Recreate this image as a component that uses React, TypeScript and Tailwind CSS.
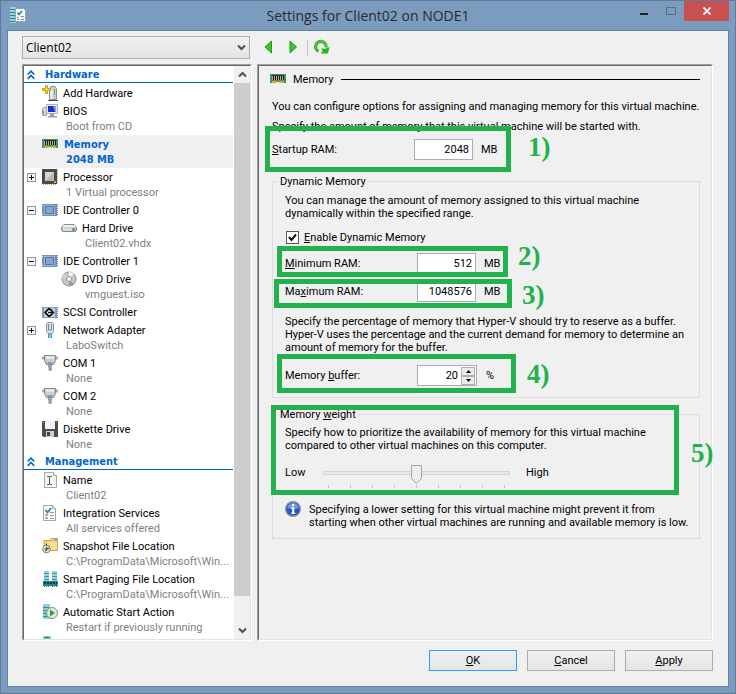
import { ReactNode, useState } from "react";

interface TreeItem {
    label: string;
    detail?: string;
    icon: ReactNode;
    toggle?: "plus" | "minus";
    child?: boolean;
    selected?: boolean;
}

interface IconProps {
    children: ReactNode;
    crisp?: boolean;
}

const Icon = ({ children, crisp }: IconProps) => (
    <svg
        width="16"
        height="16"
        viewBox="0 0 16 16"
        className="block shrink-0"
        shapeRendering={crisp ? "crispEdges" : "auto"}
        aria-hidden="true"
    >
        {children}
    </svg>
);

const MemoryIcon = () => (
    <Icon crisp>
        <path d="M0 3h16v9H0z" fill="#35976a" />
        <path d="M2 4h12v5H2z" fill="#b9ad8a" />
        <path d="M3 4h1v5H3zM5 4h1v5H5zM7 4h1v5H7zM9 4h1v5H9zM11 4h1v5h-1zM13 4h1v5h-1z" fill="#1c1c14" />
        <path d="M2 4h12v1H2z" fill="#33332a" />
        <path d="M2 10h5v2H2zM9 10h5v2H9z" fill="#e0a92c" />
        <path d="M7 11h2v1H7z" fill="#fff" />
    </Icon>
);

const AddHardwareIcon = () => (
    <Icon>
        <path d="M7.500 3.500l1.500-2h4l1.500 2v11h-7z" fill="#c9ccca" stroke="#8b8f8d" />
        <path d="M9.500 5v9" stroke="#f4f6f4" strokeWidth="2" />
        <path d="M12.500 4v6" stroke="#54b948" />
        <path d="M6 15.500h10" stroke="#4b4b4b" />
        <path d="M3.500 .5h2v3h3v2h-3v3h-2v-3h-3v-2h3z" fill="#ffdc3c" stroke="#c79a10" />
    </Icon>
);

const BiosIcon = () => (
    <Icon>
        <path d="M.5 5.500l1-1h3v8h-4z" fill="#d4d7d9" stroke="#9aa0a4" />
        <path d="M1.500 8v3" stroke="#49a850" />
        <path d="M4.500 1.500h11v9h-11z" fill="#e8ebf2" stroke="#a9aeb8" />
        <path d="M6 3h8v6H6z" fill="#1530c8" />
        <path d="M11 3h3v6h-1z" fill="#7d9cf0" />
        <path d="M8 11h4v2h3v1.500H6V13h2z" fill="#9ba0a8" />
    </Icon>
);

const ProcessorIcon = () => (
    <Icon>
        <path d="M15.500 1v13M1 15.500h13" stroke="#c8a04a" strokeDasharray="1 1" />
        <path d="M0 0h15v15H0z" fill="#4a4a4a" />
        <path d="M3 3h9v9H3z" fill="#b9b9b9" />
        <path d="M3 3h9L3 12z" fill="#d5d5d5" />
        <path d="M12 12h2v2h-2z" fill="#e2a72a" />
    </Icon>
);

const ControllerIcon = () => (
    <Icon crisp>
        <path d="M0 2h15v12H0z" fill="#7291b8" />
        <path d="M15 2h1v1h-1zM15 4h1v1h-1zM15 6h1v1h-1zM15 8h1v1h-1zM15 10h1v1h-1zM15 12h1v1h-1z" fill="#6684aa" />
        <path d="M0 3h1v1H0zM0 12h1v1H0z" fill="#fff" />
        <path d="M2 3h11v10H2z" fill="#9fb6d2" />
        <path d="M3 4h9v8H3z" fill="#58779f" />
        <path d="M4 5h7v6H4z" fill="#86a5ca" />
    </Icon>
);

const ScsiIcon = () => (
    <Icon>
        <path d="M0 3h15v11H0z" fill="#7c99bf" />
        <path d="M15.500 3v11" stroke="#6684aa" strokeDasharray="1 1" />
        <path d="M2 4h11v9H2z" fill="#bdd0e6" />
        <path d="M7 2.800l5.700 5.700L7 14.200 1.300 8.500z" fill="#fff" />
        <path d="M9.500 6.500L7 4.500l-4 4 4 4 2.500-2" fill="none" stroke="#111" strokeWidth="1.800" />
        <path d="M6 8.500h6M9 6l2.500 2.500L9 11" fill="none" stroke="#111" strokeWidth="1.600" />
    </Icon>
);

const HardDriveIcon = () => (
    <Icon>
        <path d="M3 4.500h10l2.500 3v3l-1 1h-13l-1-1v-3z" fill="#b5b5b5" stroke="#8a8a8a" />
        <path d="M3 5h10l2 2.500H1z" fill="#f0f0f0" />
        <path d="M2 9.500h9" stroke="#e8e8e8" strokeWidth="2" />
        <path d="M12.500 8v3" stroke="#35b335" strokeWidth="2" />
    </Icon>
);

const DvdIcon = () => (
    <Icon>
        <circle cx="8" cy="8" r="7" fill="#c5c7c5" stroke="#8c8e8c" />
        <path d="M8 8L3 2.500A7 7 0 0 0 1 8z" fill="#b5e0b5" />
        <path d="M8 8l5-5.500A7 7 0 0 0 8 1z" fill="#f3f3f3" />
        <path d="M8 8l5 5.500A7 7 0 0 1 8 15z" fill="#999" />
        <circle cx="8" cy="8" r="2.500" fill="#eee" stroke="#999" />
        <circle cx="8" cy="8" r="1" fill="#fff" />
    </Icon>
);

const NetworkIcon = () => (
    <Icon>
        <path d="M4.500 1.500l1-1h5l1 1v8l-1.500 2H6l-1.500-2z" fill="#d9e0e8" stroke="#8496a8" />
        <path d="M6.500 2v6h3V2" fill="none" stroke="#73869a" />
        <path d="M6 12h1.500v4H6zM8.500 12H10v4H8.500z" fill="#2397c9" />
    </Icon>
);

const ComIcon = () => (
    <Icon>
        <path d="M0 1.500h16v3H0z" fill="#a4acb2" />
        <path d="M2.500.5h11v5l-2 4h-7l-2-4z" fill="#c7ced3" stroke="#7f898f" />
        <path d="M4 2.500h8" stroke="#eef2f4" strokeWidth="2" />
        <path d="M5 7l1 2h4l1-2z" fill="#8f9aa2" />
        <path d="M6 10h4v2H6zM6.500 12.500h3V16h-3z" fill="#a3b0b8" />
        <path d="M6 12h4M7 14h3" stroke="#737f87" />
    </Icon>
);

const DisketteIcon = () => (
    <Icon crisp>
        <path d="M0 0h16v16H1l-1-1z" fill="#4c4c4c" />
        <path d="M3 0h10v8H3z" fill="#f4f4f4" />
        <path d="M1 1h1v1H1zM14 1h1v1h-1z" fill="#999" />
        <path d="M4 10h8v6H4z" fill="#cfcfcf" />
        <path d="M5 11h3v4H5z" fill="#444" />
    </Icon>
);

const NameIcon = () => (
    <Icon>
        <path d="M2.500.5h9l3 3v12h-12z" fill="#f7f7f7" stroke="#a5a5a5" />
        <path d="M11.500.5v3h3" fill="#fff" stroke="#a5a5a5" />
        <path d="M5 4.500h2l.5.500.5-.5h2M5 12.500h2l.5-.5.5.5h2M7.500 5v7" fill="none" stroke="#555" />
    </Icon>
);

const ChecklistIcon = () => (
    <Icon>
        <path d="M1.500.5h9l3 3v12h-12z" fill="#fbfbfb" stroke="#a5a5a5" />
        <path d="M10.500.5v3h3" fill="#eee" stroke="#a5a5a5" />
        <path d="M3.500 5l2 2.500L9 3" fill="none" stroke="#2a84b4" strokeWidth="1.800" />
        <path d="M3.500 9.500h2v1h-2zM3.500 12.500h2v1h-2z" fill="none" stroke="#9a9a9a" />
        <path d="M8 7.500h4M8 10.500h4M8 13.500h4" stroke="#9a9a9a" />
    </Icon>
);

const SnapshotIcon = () => (
    <Icon>
        <path d="M2 2.500h6l1-2h6.500v12H2z" fill="#f0cf78" stroke="#cfa445" />
        <path d="M12 .5h3v2h-3z" fill="#6fa7dc" />
        <path d="M5 4h10v8H5z" fill="#f8dd94" />
        <circle cx="4.500" cy="11" r="3.800" fill="#e9ecea" stroke="#7c7f7c" />
        <path d="M4.500 5.500v2M4.500 9v4M2.500 11h4" stroke="#333" />
        <path d="M4.500 11l2.500-1" stroke="#d33" strokeWidth="1.500" />
        <path d="M3 12.500h2" stroke="#2a9a3a" strokeWidth="1.500" />
    </Icon>
);

const PagingIcon = () => (
    <Icon crisp>
        <path d="M2 0h5v10H2zM10 0h5v10h-5z" fill="#9bd3d8" />
        <path d="M2 2h5v1H2zM2 5h5v1H2zM2 8h5v1H2zM10 2h5v1h-5zM10 5h5v1h-5zM10 8h5v1h-5z" fill="#3d99a3" />
        <path d="M1 10h15v5H1z" fill="#268489" />
        <path d="M2 11h2v2H2zM5 11h2v2H5zM8 11h2v2H8zM11 11h2v2h-2zM14 11h1v2h-1z" fill="#0c3c40" />
        <path d="M2 15h1v1H2zM4 15h1v1H4zM6 15h1v1H6zM10 15h1v1h-1zM12 15h1v1h-1zM14 15h1v1h-1z" fill="#268489" />
    </Icon>
);

const StartIcon = () => (
    <Icon>
        <path d="M1 0h7v15H1z" fill="#8fd0d8" />
        <path d="M1 3.500h6M1 6.500h6M1 9.500h6M1 12.500h6" stroke="#2f8d99" />
        <circle cx="10" cy="9" r="5.500" fill="#e4e8e4" stroke="#868a86" />
        <path d="M8 5.500l5 3.500-5 3.500z" fill="#25a62c" />
    </Icon>
);

const StopIcon = () => (
    <Icon crisp>
        <path d="M1 0h8v15H1z" fill="#7fc8d0" />
        <path d="M3 1h4v1H3z" fill="#1d6c76" />
    </Icon>
);

const SettingsIcon = () => (
    <Icon>
        <path d="M0 0h6v16H0z" fill="#94d4da" />
        <path d="M0 2.500h5M0 5.500h5M0 8.500h5M0 11.500h5M0 14.500h5" stroke="#2b8390" />
        <path d="M5.500 1.500h8l2 2v11h-10z" fill="#fafafa" stroke="#9aa3aa" />
        <path d="M7.500 5.500l1.500 2L12 4" fill="none" stroke="#2679b4" strokeWidth="1.500" />
        <path d="M7 10.500h2M7 12.500h2M10.500 9.500H14M10.500 12.500H14" stroke="#8b8b9a" />
    </Icon>
);

const InfoIcon = () => (
    <Icon>
        <circle cx="8" cy="8" r="7.300" fill="#2456c4" stroke="#8e9196" strokeWidth="1.400" />
        <path d="M2.500 7a5.500 5 0 0 1 11 0c-3 1.500-8 1.500-11 0z" fill="#6a95e4" />
        <path d="M7 3h2.200v2H7zM6.300 6.300h2.900v5.200h1V13H6.300v-1.500h.9V7.700h-.9z" fill="#fff" />
    </Icon>
);

const hardware: TreeItem[] = [
    { label: "Add Hardware", icon: <AddHardwareIcon /> },
    { label: "BIOS", detail: "Boot from CD", icon: <BiosIcon /> },
    { label: "Memory", detail: "2048 MB", icon: <MemoryIcon />, selected: true },
    { label: "Processor", detail: "1 Virtual processor", icon: <ProcessorIcon />, toggle: "plus" },
    { label: "IDE Controller 0", icon: <ControllerIcon />, toggle: "minus" },
    { label: "Hard Drive", detail: "Client02.vhdx", icon: <HardDriveIcon />, child: true },
    { label: "IDE Controller 1", icon: <ControllerIcon />, toggle: "minus" },
    { label: "DVD Drive", detail: "vmguest.iso", icon: <DvdIcon />, child: true },
    { label: "SCSI Controller", icon: <ScsiIcon /> },
    { label: "Network Adapter", detail: "LaboSwitch", icon: <NetworkIcon />, toggle: "plus" },
    { label: "COM 1", detail: "None", icon: <ComIcon /> },
    { label: "COM 2", detail: "None", icon: <ComIcon /> },
    { label: "Diskette Drive", detail: "None", icon: <DisketteIcon /> },
];

const management: TreeItem[] = [
    { label: "Name", detail: "Client02", icon: <NameIcon /> },
    { label: "Integration Services", detail: "All services offered", icon: <ChecklistIcon /> },
    { label: "Snapshot File Location", detail: "C:\\ProgramData\\Microsoft\\Win...", icon: <SnapshotIcon /> },
    { label: "Smart Paging File Location", detail: "C:\\ProgramData\\Microsoft\\Win...", icon: <PagingIcon /> },
    { label: "Automatic Start Action", detail: "Restart if previously running", icon: <StartIcon /> },
];

const Toggle = ({ kind }: { kind: "plus" | "minus" }) => (
    <button aria-label={kind === "plus" ? "Expand" : "Collapse"} className="block shrink-0">
        <svg width="9" height="9" viewBox="0 0 9 9" className="block" shapeRendering="crispEdges">
            <path d="M.5.5h8v8h-8z" fill="#f4f6f8" stroke="#8c9aa8" />
            <path d="M2 4h5v1H2z" fill="#111" />
            {kind === "plus" && <path d="M4 2h1v5H4z" fill="#111" />}
        </svg>
    </button>
);

const TreeRow = ({ item }: { item: TreeItem }) => (
    <li className={item.selected ? "bg-[#f0f0f0] font-['DejaVu_Sans_Condensed',Tahoma,sans-serif] font-bold text-[#0066cc]" : ""}>
        <div className={`flex h-[18px] items-center ${item.child ? "pl-[37px]" : "pl-[3px]"}`}>
            {!item.child && <span className="w-[15px] shrink-0">{item.toggle && <Toggle kind={item.toggle} />}</span>}
            {item.icon}
            <a href="#" className={`whitespace-nowrap ${item.selected ? "pl-[6px]" : "pl-[5px]"}`}>{item.label}</a>
        </div>
        {item.detail && (
            <p
                className={`h-[15px] leading-[13px] whitespace-nowrap
                    ${item.child ? "pl-[61px]" : "pl-[42px]"} ${item.selected ? "" : "text-[#808080]"}`}
            >
                {item.detail}
            </p>
        )}
    </li>
);

const TreeHeading = ({ title }: { title: string }) => (
    <h2 className="flex h-[18px] items-start font-['DejaVu_Sans_Condensed',Tahoma,sans-serif] font-bold text-[#0066cc]">
        <span className="flex h-[17px] w-full items-center border-b border-[#0066cc] pt-px pl-[3px]">
            <svg width="8" height="10" viewBox="0 0 8 10" className="block" aria-hidden="true">
                <path d="M.7 4.500L4 1.200l3.300 3.300M.7 8.800L4 5.500l3.300 3.300" fill="none" stroke="#0066cc" strokeWidth="1.700" />
            </svg>
            <span className="pl-[10px]">{title}</span>
        </span>
    </h2>
);

const Chevron = ({ up }: { up?: boolean }) => (
    <svg width="9" height="7" viewBox="0 0 9 7" className="block" aria-hidden="true">
        <path d={up ? "M1 5.500L4.500 2 8 5.500" : "M1 1.500L4.500 5 8 1.500"} fill="none" stroke="#505050" strokeWidth="2" />
    </svg>
);

const Sidebar = () => (
    <nav className="flex w-[230px] shrink-0 border border-t-[#a0a0a0] border-r-white border-b-white border-l-[#a0a0a0]">
        <div className="flex min-h-0 w-full border border-t-[#696969] border-r-[#e3e3e3] border-b-[#e3e3e3] border-l-[#696969] bg-white">
            <div className="min-w-0 flex-1 overflow-hidden pr-px">
                <TreeHeading title="Hardware" />
                <ul>
                    {hardware.map((item) => (
                        <TreeRow key={item.label} item={item} />
                    ))}
                </ul>
                <TreeHeading title="Management" />
                <ul>
                    {management.map((item) => (
                        <TreeRow key={item.label} item={item} />
                    ))}
                </ul>
                <div className="pl-[18px]">
                    <StopIcon />
                </div>
            </div>
            <div className="flex w-4 shrink-0 flex-col bg-[#f0f0f0]">
                <button aria-label="Scroll up" className="flex h-[17px] shrink-0 items-center justify-center">
                    <Chevron up />
                </button>
                <div className="flex-1 bg-[#cdcdcd]" />
                <div className="h-[26px] shrink-0" />
                <button aria-label="Scroll down" className="flex h-[17px] shrink-0 items-center justify-center">
                    <Chevron />
                </button>
            </div>
        </div>
    </nav>
);

interface RamFieldProps {
    id: string;
    label: ReactNode;
    value: string;
    unit: string;
    onChange: (value: string) => void;
    onStep?: (step: number) => void;
    wide?: boolean;
}

const RamField = (props: RamFieldProps) => (
    <div className="flex h-[21px] items-center">
        <label htmlFor={props.id} className={props.wide ? "w-[142px]" : "w-[132px]"}>
            {props.label}
        </label>
        <div className={`flex h-[21px] border border-[#abadb3] bg-white ${props.onStep ? "w-[60px]" : "w-[59px]"}`}>
            <input
                id={props.id}
                value={props.value}
                onChange={(e) => props.onChange(e.target.value)}
                className="w-full min-w-0 flex-1 bg-transparent pr-[3px] pb-px text-right outline-none"
            />
            {props.onStep && (
                <span className="flex w-[15px] shrink-0 flex-col pt-px pr-px">
                    <button
                        aria-label="Increase"
                        onClick={() => props.onStep?.(1)}
                        className="flex h-[9px] items-center justify-center border border-[#b0b0b0] bg-[#ececec]"
                    >
                        <svg width="5" height="3" viewBox="0 0 5 3" className="block"><path d="M2.500 0L5 3H0z" /></svg>
                    </button>
                    <button
                        aria-label="Decrease"
                        onClick={() => props.onStep?.(-1)}
                        className="flex h-[9px] items-center justify-center border border-[#b0b0b0] bg-[#ececec]"
                    >
                        <svg width="5" height="3" viewBox="0 0 5 3" className="block"><path d="M0 0h5L2.500 3z" /></svg>
                    </button>
                </span>
            )}
        </div>
        <span className={props.onStep ? "pl-[9px]" : "pl-2"}>{props.unit}</span>
    </div>
);

const WeightSlider = () => {
    const [weight, setWeight] = useState(4);
    const center = 93 + (weight - 4) * 22;
    return (
        <div className="mt-[11px] flex h-[26px]">
            <label htmlFor="weight" className="w-[38px] pt-[3px]">Low</label>
            <div className="relative w-[187px]">
                <svg width="187" height="26" viewBox="0 0 187 26" className="block" aria-hidden="true">
                    <path d="M.5 8.500h186v3H.5z" fill="#e7eaea" stroke="#d3d6d6" />
                    {[0, 1, 2, 3, 4, 5, 6, 7, 8].map((tick) => (
                        <rect key={tick} x={5 + tick * 22} y="22" width="1" height="3" fill="#c4c4c4" />
                    ))}
                    <path
                        d={`M${center - 4.5} 2.500h10v13l-5 5-5-5z`}
                        fill="#ededed"
                        stroke="#a5a5a5"
                    />
                </svg>
                <input
                    id="weight"
                    type="range"
                    min="0"
                    max="8"
                    value={weight}
                    onChange={(e) => setWeight(Number(e.target.value))}
                    className="absolute inset-0 h-full w-full opacity-0"
                />
            </div>
            <span className="pt-[3px] pl-4">High</span>
        </div>
    );
};

// Numbered callouts drawn over the settings pane
const Callouts = () => (
    <div className="pointer-events-none absolute inset-0 font-['Liberation_Serif',serif] text-[27px] leading-[30px] font-bold text-[#22b14c]">
        <div className="absolute top-[60px] left-[6px] h-[46px] w-[246px] border-5 border-[#22b14c]" />
        <div className="absolute top-[180px] left-[18px] h-[31px] w-[231px] border-5 border-[#22b14c]" />
        <div className="absolute top-[213px] left-[15px] h-[29px] w-[238px] border-5 border-[#22b14c]" />
        <div className="absolute top-[288px] left-[18px] h-[39px] w-[239px] border-5 border-[#22b14c]" />
        <div className="absolute top-[339px] left-[12px] h-[90px] w-[408px] border-5 border-[#22b14c]" />
        <span className="absolute top-[66px] left-[269px]">1)</span>
        <span className="absolute top-[175px] left-[259px]">2)</span>
        <span className="absolute top-[214px] left-[263px]">3)</span>
        <span className="absolute top-[293px] left-[268px]">4)</span>
        <span className="absolute top-[372px] left-[432px]">5)</span>
    </div>
);

const MemoryPanel = () => {
    const [startup, setStartup] = useState("2048");
    const [minimum, setMinimum] = useState("512");
    const [maximum, setMaximum] = useState("1048576");
    const [buffer, setBuffer] = useState("20");
    const [dynamic, setDynamic] = useState(true);

    return (
        <main className="flex min-w-0 flex-1 border border-t-[#a0a0a0] border-r-white border-b-white border-l-[#a0a0a0]">
            <div className="relative w-full border border-t-[#696969] border-r-[#e3e3e3] border-b-[#e3e3e3] border-l-[#696969] pr-[11px] pl-[11px]">
                <div className="flex h-[26px] items-center">
                    <MemoryIcon />
                    <h2 className="pr-2 pl-[7px]">Memory</h2>
                    <div className="h-px flex-1 bg-black" />
                </div>
                <div className="pl-[2px]">
                    <p className="mt-2 whitespace-nowrap">You can configure options for assigning and managing memory for this virtual machine.</p>
                    <p className="mt-[7px] mb-[6px] whitespace-nowrap">Specify the amount of memory that this virtual machine will be started with.</p>
                    <RamField id="startup" label={<><u>S</u>tartup RAM:</>} value={startup} unit="MB" onChange={setStartup} wide />

                    <fieldset className="mt-[15px] min-w-0 border border-[#dcdcdc] pb-[11px] pl-3">
                        <legend className="-ml-[6px] px-px">Dynamic Memory</legend>
                        <p className="pt-[6px] whitespace-nowrap">
                            You can manage the amount of memory assigned to this virtual machine<br />
                            dynamically within the specified range.
                        </p>
                        <label className="mt-[11px] flex h-[13px] w-fit items-center gap-[5px] pl-px">
                            <span className="relative block size-[13px] border border-[#555] bg-white">
                                <input
                                    type="checkbox"
                                    checked={dynamic}
                                    onChange={(e) => setDynamic(e.target.checked)}
                                    className="absolute inset-0 size-full opacity-0"
                                />
                                {dynamic && (
                                    <svg width="11" height="11" viewBox="0 0 11 11" className="block" aria-hidden="true">
                                        <path d="M2 5l2.500 3L9 2.500" fill="none" stroke="#111" strokeWidth="2" />
                                    </svg>
                                )}
                            </span>
                            <span><u>E</u>nable Dynamic Memory</span>
                        </label>
                        <div className="mt-[9px] flex flex-col gap-[7px]">
                            <RamField id="minimum" label={<><u>M</u>inimum RAM:</>} value={minimum} unit="MB" onChange={setMinimum} />
                            <RamField id="maximum" label={<>Ma<u>x</u>imum RAM:</>} value={maximum} unit="MB" onChange={setMaximum} />
                        </div>
                        <p className="mt-[13px] mb-[11px] whitespace-nowrap">
                            Specify the percentage of memory that Hyper-V should try to reserve as a buffer.<br />
                            Hyper-V uses the percentage and the current demand for memory to determine an<br />
                            amount of memory for the buffer.
                        </p>
                        <RamField
                            id="buffer"
                            label={<>Memory <u>b</u>uffer:</>}
                            value={buffer}
                            unit="%"
                            onChange={setBuffer}
                            onStep={(step) => setBuffer(String(Number(buffer) + step))}
                        />
                    </fieldset>

                    <fieldset className="mt-[10px] min-w-0 border border-[#dcdcdc] pb-[9px] pl-3">
                        <legend className="-ml-[6px] px-px">Memory <u>w</u>eight</legend>
                        <p className="pt-[5px] whitespace-nowrap">
                            Specify how to prioritize the availability of memory for this virtual machine<br />
                            compared to other virtual machines on this computer.
                        </p>
                        <WeightSlider />
                        <div className="mt-3 flex gap-2">
                            <InfoIcon />
                            <p className="pt-[2px] whitespace-nowrap">
                                Specifying a lower setting for this virtual machine might prevent it from<br />
                                starting when other virtual machines are running and available memory is low.
                            </p>
                        </div>
                    </fieldset>
                </div>
                <Callouts />
            </div>
        </main>
    );
};

const TitleBar = () => (
    <header className="grid h-[29px] shrink-0 grid-cols-[1fr_auto_1fr] items-start">
        <div className="pt-[6px] pl-[3px]">
            <SettingsIcon />
        </div>
        <h1 className="pt-[4px] font-['Open_Sans',sans-serif] text-[14px] leading-[22px] text-[#2a2a2a]">
            Settings for Client02 on NODE1
        </h1>
        <div className="flex h-5 justify-end">
            <button aria-label="Minimize" className="flex w-[26px] items-end justify-center pb-[6px]">
                <span className="block h-[2px] w-2 bg-[#222]" />
            </button>
            <button aria-label="Maximize" className="flex w-[27px] items-start justify-center pt-[6px]">
                <span className="block h-2 w-[10px] border border-[#566d87]" />
            </button>
            <button aria-label="Close" className="flex w-[45px] items-center justify-center bg-[#c75050]">
                <svg width="8" height="8" viewBox="0 0 8 8" className="block" aria-hidden="true">
                    <path d="M.5.5l7 7M7.500.5l-7 7" stroke="#fff" strokeWidth="1.800" />
                </svg>
            </button>
        </div>
    </header>
);

const Toolbar = () => (
    <div className="flex h-[23px] shrink-0 items-center">
        <div className="relative w-[228px]">
            <select
                aria-label="Virtual machine"
                className="block h-[23px] w-full appearance-none border border-[#acacac] bg-linear-to-b from-[#f0f0f0] to-[#e5e5e5] pl-[3px] font-['Open_Sans',sans-serif] text-[12px]"
            >
                <option>Client02</option>
            </select>
            <span className="pointer-events-none absolute top-2 right-1">
                <Chevron />
            </span>
        </div>
        <button aria-label="Back" className="pb-px pl-[14px]">
            <svg width="9" height="14" viewBox="0 0 9 14" className="block">
                <path d="M7.500 1v12L1 7z" fill="#3cc52e" stroke="#249a1c" />
            </svg>
        </button>
        <button aria-label="Forward" className="pb-px pl-4">
            <svg width="9" height="14" viewBox="0 0 9 14" className="block">
                <path d="M1 1v12l6.500-6z" fill="#3cc52e" stroke="#249a1c" />
            </svg>
        </button>
        <span className="ml-[9px] h-4 w-px bg-[#c2c2c2]" />
        <button aria-label="Refresh" className="pb-px pl-[5px]">
            <svg width="17" height="16" viewBox="0 0 17 16" className="block">
                <path d="M5.500 12.300A5.200 5.200 0 1 1 13 8.500" fill="none" stroke="#28a51f" strokeWidth="3.200" />
                <path d="M5.500 12A5.200 5.200 0 1 1 13 8.500" fill="none" stroke="#62dc52" strokeWidth="1.200" />
                <path d="M16.500 8l-1.500 6.500H7.500l2-2.200-1-3.300 3 1z" fill="#2bb520" />
            </svg>
        </button>
    </div>
);

const App = () => {
    return (
        <div className="flex h-screen flex-col border border-[#5f7b99] bg-[#7b9cbf] px-[6px] pb-[6px] font-[Roboto,Tahoma,sans-serif] text-[11px] leading-[13px] text-black">
            <TitleBar />
            <div className="flex min-h-0 flex-1 flex-col border border-[#5f84a8] bg-[#f0f0f0] pt-[5px] pr-[15px] pb-[15px] pl-[14px]">
                <Toolbar />
                <div className="mt-[5px] flex min-h-0 flex-1 gap-[5px]">
                    <Sidebar />
                    <MemoryPanel />
                </div>
                <footer className="mt-[9px] flex shrink-0 justify-end gap-[10px]">
                    <button className="h-[21px] w-[88px] border border-[#3399ff] bg-linear-to-b from-[#f0f0f0] to-[#e5e5e5]">
                        <u>O</u>K
                    </button>
                    <button className="h-[21px] w-[88px] border border-[#acacac] bg-linear-to-b from-[#f0f0f0] to-[#e5e5e5]">
                        <u>C</u>ancel
                    </button>
                    <button className="h-[21px] w-[88px] border border-[#acacac] bg-linear-to-b from-[#f0f0f0] to-[#e5e5e5]">
                        <u>A</u>pply
                    </button>
                </footer>
            </div>
        </div>
    );
};

export default App;
